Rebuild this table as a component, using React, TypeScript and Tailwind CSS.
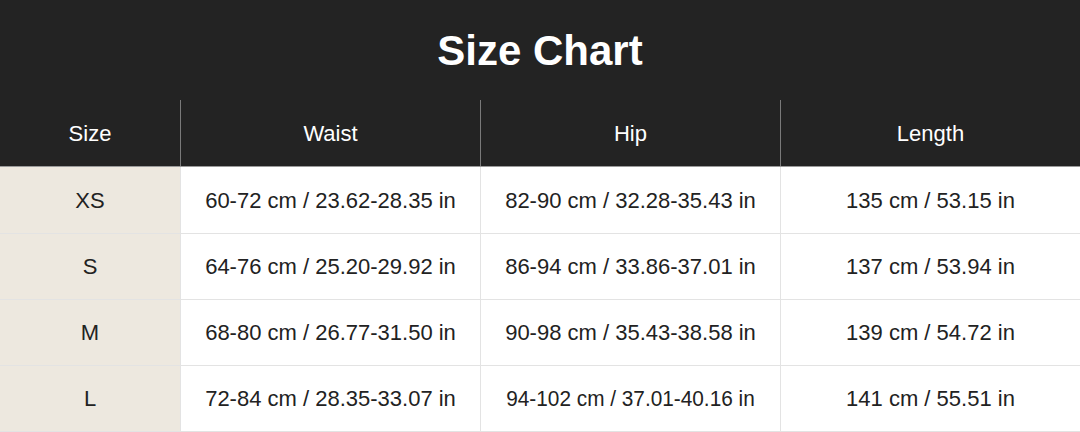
import React from "react";

const rows = [
  ["XS", "60-72 cm / 23.62-28.35 in", "82-90 cm / 32.28-35.43 in", "135 cm / 53.15 in"],
  ["S", "64-76 cm / 25.20-29.92 in", "86-94 cm / 33.86-37.01 in", "137 cm / 53.94 in"],
  ["M", "68-80 cm / 26.77-31.50 in", "90-98 cm / 35.43-38.58 in", "139 cm / 54.72 in"],
  ["L", "72-84 cm / 28.35-33.07 in", "94-102 cm / 37.01-40.16 in", "141 cm / 55.51 in"],
];

export default function App() {
  return (
    <div className="w-[1080px] h-[432px] overflow-hidden bg-white font-['Liberation_Sans',Arial,sans-serif]">
      <div className="bg-[#232323]">
        <div className="h-[100px] flex items-center justify-center text-white text-[42px] font-bold">
          Size Chart
        </div>
        <div className="grid grid-cols-[180px_300px_300px_300px] h-[67px] text-white text-[22px] border-b border-[#9a9a9a]">
          <div className="flex items-center justify-center pt-px">Size</div>
          <div className="flex items-center justify-center pt-px border-l border-[#7a7a7a]">Waist</div>
          <div className="flex items-center justify-center pt-px border-l border-[#7a7a7a]">Hip</div>
          <div className="flex items-center justify-center pt-px border-l border-[#7a7a7a]">Length</div>
        </div>
      </div>
      {rows.map((r, i) => (
        <div
          key={r[0]}
          className={
            "grid grid-cols-[180px_300px_300px_300px] border-b border-[#e3e3e3] text-[#222] text-[22px] " +
            (i === 0 ? "h-[67px]" : "h-[66px]")
          }
        >
          <div className="flex items-center justify-center bg-[#ede8df]">{r[0]}</div>
          <div className="flex items-center justify-center border-l border-[#e3e3e3]">{r[1]}</div>
          <div className="flex items-center justify-center border-l border-[#e3e3e3]">
            <span className={"inline-block whitespace-nowrap " + (r[2].length > 25 ? "scale-x-[0.945]" : "")}>
              {r[2]}
            </span>
          </div>
          <div className="flex items-center justify-center border-l border-[#e3e3e3]">{r[3]}</div>
        </div>
      ))}
    </div>
  );
}
